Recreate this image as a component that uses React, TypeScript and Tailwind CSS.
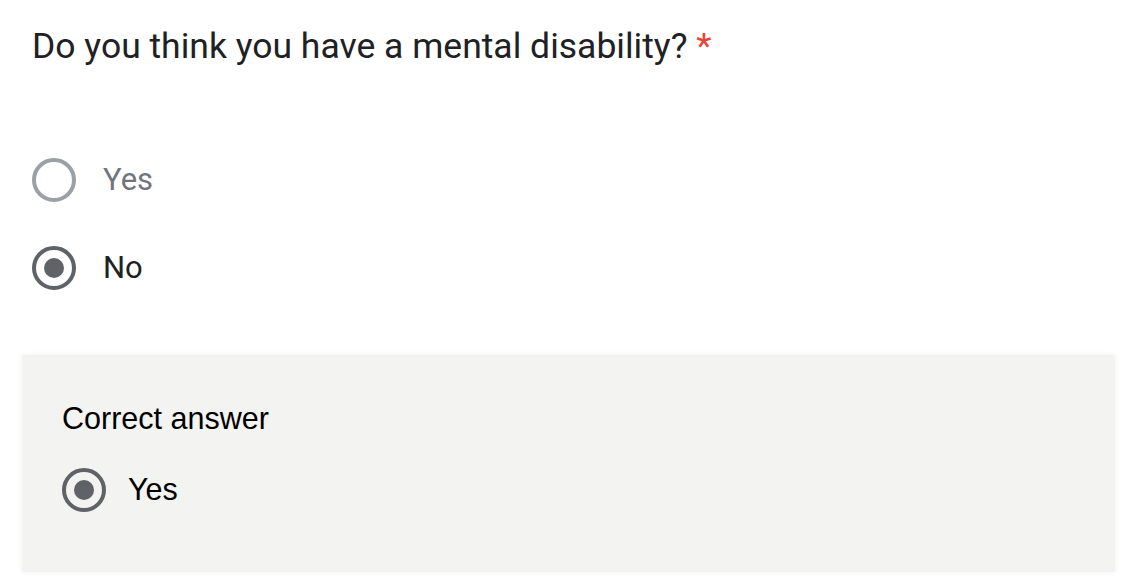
import { ReactNode } from 'react'

// Quiz question with answer options and a grey "correct answer" feedback panel.
function Radio({ checked, muted }: { checked?: boolean; muted?: boolean }) {
  return (
    <span
      className={`flex size-[44px] shrink-0 items-center justify-center rounded-full border-[4px] ${
        muted ? 'border-[#9aa0a6]' : 'border-[#5f6368]'
      }`}
    >
      {checked && <span className="size-[20px] rounded-full bg-[#5f6368]" />}
    </span>
  )
}

function Option({ children, checked, muted }: { children: ReactNode; checked?: boolean; muted?: boolean }) {
  return (
    <div className="flex h-[44px] items-center gap-[27px]">
      <Radio checked={checked} muted={muted} />
      <span className={`text-[31px] ${muted ? 'text-[#70757a]' : 'text-[#202124]'}`}>{children}</span>
    </div>
  )
}

export default function App() {
  return (
    <div className="h-[582px] w-[1124px] overflow-hidden bg-white font-['Roboto',sans-serif]">
      <div className="px-[32px] pt-[22px]">
        <h1 className="text-[35.5px] leading-[48px] text-[#202124]">
          Do you think you have a mental disability? <span className="text-[#ea4335]">*</span>
        </h1>
      </div>

      <div className="mt-[88px] flex flex-col gap-[44px] px-[32px]">
        <Option muted>Yes</Option>
        <Option checked>No</Option>
      </div>

      <div className="ml-[22px] mr-[9px] mt-[65px] h-[217px] bg-[#f3f3f1] px-[40px] pt-[43px] font-['Liberation_Sans',sans-serif] shadow-[0_0_6px_rgba(0,0,0,0.06)]">
        <div className="text-[30.5px] leading-[40px] text-black">Correct answer</div>
        <div className="mt-[30px] flex h-[44px] items-center gap-[22px]">
          <Radio checked />
          <span className="text-[30.5px] text-black">Yes</span>
        </div>
      </div>
    </div>
  )
}
